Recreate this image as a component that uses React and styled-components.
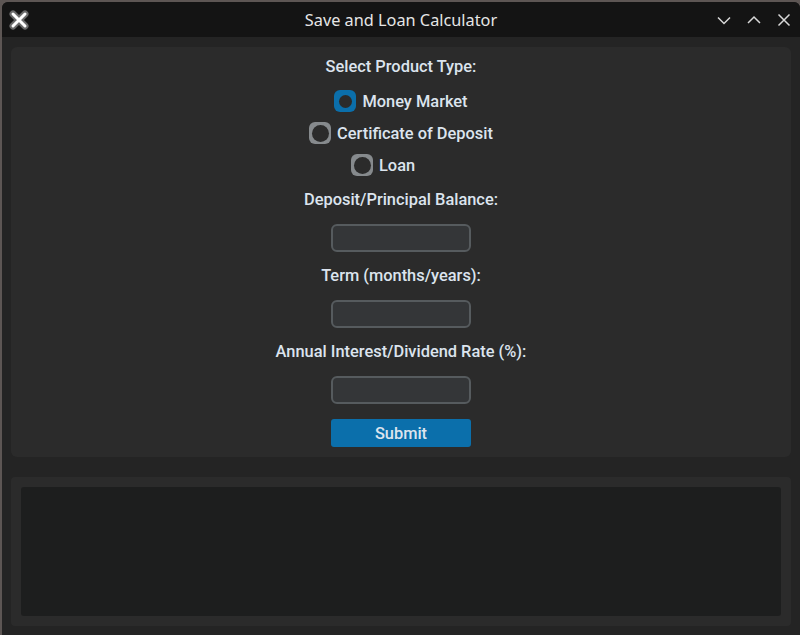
import React, { useState } from "react";
import styled, { createGlobalStyle } from "styled-components";

const Global = createGlobalStyle`
  html, body { margin: 0; padding: 0; background: #5d5654; }
  body { width: 800px; height: 635px; overflow: hidden; font-family: Roboto, "Noto Sans", sans-serif; }
`;

const Window = styled.div`
  margin: 2px 0 0 2px;
  width: 798px;
  height: 633px;
  background: #242424;
  border-radius: 6px 6px 0 0;
  overflow: hidden;
  display: flex;
  flex-direction: column;
`;

const TitleBar = styled.div`
  height: 35px;
  background: #141414;
  display: flex;
  align-items: center;
  position: relative;
  flex-shrink: 0;
`;

const Title = styled.div`
  position: absolute;
  left: 0;
  right: 0;
  top: 0;
  bottom: 0;
  display: flex;
  align-items: center;
  justify-content: center;
  font-family: "Noto Sans", sans-serif;
  font-size: 16.3px;
  color: #e6e6e6;
  pointer-events: none;
`;

const AppIcon = styled.svg`
  margin-left: 6px;
  width: 22px;
  height: 22px;
`;

const Controls = styled.div`
  margin-left: auto;
  display: flex;
  align-items: center;
  gap: 16px;
  padding-right: 9px;
`;

const CtrlIcon = styled.svg`
  width: 14px;
  height: 14px;
  display: block;
`;

const Body = styled.div`
  flex: 1;
  padding: 10px 9px 9px 9px;
  display: flex;
  flex-direction: column;
  gap: 20px;
`;

const Frame = styled.div`
  background: #2b2b2b;
  border-radius: 6px;
  display: flex;
  flex-direction: column;
  align-items: center;
  padding: 10px 0 10px 0;
`;

const Label = styled.div`
  height: 20px;
  line-height: 20px;
  font-size: 16.4px;
  font-weight: 500;
  color: #dce4ee;
  margin-top: ${(p) => p.$mt || 0}px;
  white-space: nowrap;
`;

const RadioRow = styled.label`
  display: flex;
  align-items: center;
  gap: 6px;
  min-width: 100px;
  height: 22px;
  margin-top: ${(p) => p.$mt || 0}px;
  cursor: pointer;
  font-size: 16.4px;
  font-weight: 500;
  color: #dce4ee;
  white-space: nowrap;
`;

const RadioBox = styled.span`
  width: 22px;
  height: 22px;
  box-sizing: border-box;
  border-radius: 6px;
  background: ${(p) => (p.$on ? "#0b6fab" : "#868a8d")};
  display: flex;
  align-items: center;
  justify-content: center;
  flex-shrink: 0;
  &::after {
    content: "";
    width: ${(p) => (p.$on ? 13 : 17)}px;
    height: ${(p) => (p.$on ? 13 : 17)}px;
    border-radius: 50%;
    background: #2b2b2b;
  }
`;

const Entry = styled.input`
  width: 140px;
  height: 28px;
  box-sizing: border-box;
  margin-top: 14px;
  background: #343638;
  border: 2px solid #565b5e;
  border-radius: 6px;
  color: #dce4ee;
  font-family: Roboto, sans-serif;
  font-size: 14px;
  padding: 0 6px;
  outline: none;
`;

const SubmitButton = styled.button`
  width: 140px;
  height: 28px;
  margin-top: 15px;
  border: none;
  border-radius: 3px;
  background: #0b6fab;
  color: #dce4ee;
  font-family: Roboto, sans-serif;
  font-size: 16.4px;
  font-weight: 500;
  cursor: pointer;
`;

const OutputFrame = styled.div`
  background: #2b2b2b;
  border-radius: 4px;
  height: 149px;
  padding: 10px;
  box-sizing: border-box;
  display: flex;
`;

const OutputBox = styled.div`
  flex: 1;
  background: #1d1e1e;
  border-radius: 3px;
`;

const options = [
  { key: "mm", label: "Money Market", mt: 13 },
  { key: "cd", label: "Certificate of Deposit", mt: 10 },
  { key: "loan", label: "Loan", mt: 10 },
];

export default function App() {
  const [sel, setSel] = useState("mm");
  return (
    <>
      <Global />
      <Window>
        <TitleBar>
          <AppIcon viewBox="0 0 22 22">
            <path d="M5 5 L17 17 M17 5 L5 17" stroke="#6a6a6a" strokeWidth="7" strokeLinecap="round" />
            <path d="M5 5 L17 17 M17 5 L5 17" stroke="#ffffff" strokeWidth="3" strokeLinecap="round" />
          </AppIcon>
          <Title>Save and Loan Calculator</Title>
          <Controls>
            <CtrlIcon viewBox="0 0 14 14">
              <path d="M1 4.5 L7 10.5 L13 4.5" fill="none" stroke="#d8d8d8" strokeWidth="1.5" />
            </CtrlIcon>
            <CtrlIcon viewBox="0 0 14 14">
              <path d="M1 10 L7 4 L13 10" fill="none" stroke="#d8d8d8" strokeWidth="1.5" />
            </CtrlIcon>
            <CtrlIcon viewBox="0 0 14 14">
              <path d="M1.5 1.5 L12.5 12.5 M12.5 1.5 L1.5 12.5" fill="none" stroke="#d8d8d8" strokeWidth="1.5" />
            </CtrlIcon>
          </Controls>
        </TitleBar>
        <Body>
          <Frame>
            <Label>Select Product Type:</Label>
            {options.map((o) => (
              <RadioRow key={o.key} $mt={o.mt} onClick={() => setSel(o.key)}>
                <RadioBox $on={sel === o.key} />
                {o.label}
              </RadioRow>
            ))}
            <Label $mt={14}>Deposit/Principal Balance:</Label>
            <Entry />
            <Label $mt={14}>Term (months/years):</Label>
            <Entry />
            <Label $mt={14}>Annual Interest/Dividend Rate (%):</Label>
            <Entry />
            <SubmitButton>Submit</SubmitButton>
          </Frame>
          <OutputFrame>
            <OutputBox />
          </OutputFrame>
        </Body>
      </Window>
    </>
  );
}
